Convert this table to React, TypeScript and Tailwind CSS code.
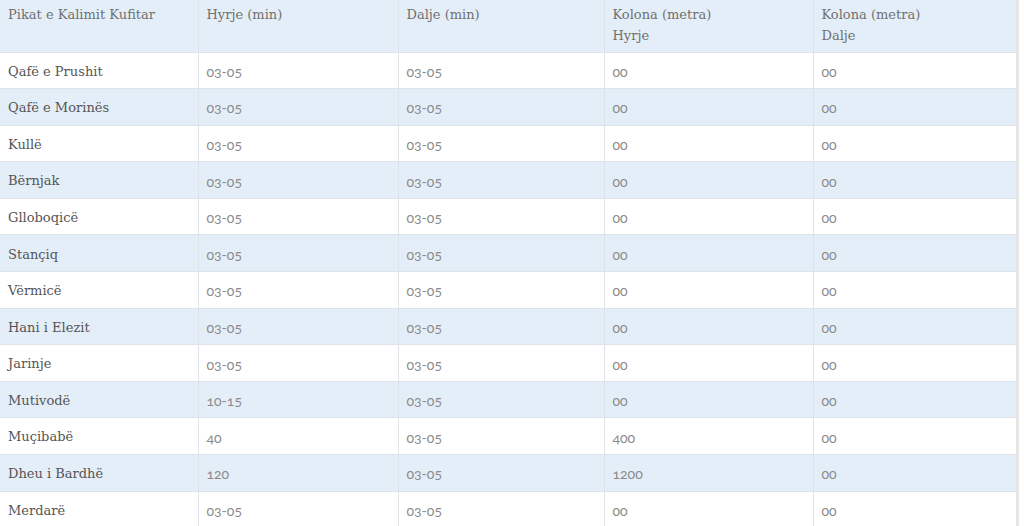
const rows: [string, string, string, string, string][] = [
  ["Qafë e Prushit", "03-05", "03-05", "00", "00"],
  ["Qafë e Morinës", "03-05", "03-05", "00", "00"],
  ["Kullë", "03-05", "03-05", "00", "00"],
  ["Bërnjak", "03-05", "03-05", "00", "00"],
  ["Glloboqicë", "03-05", "03-05", "00", "00"],
  ["Stançiq", "03-05", "03-05", "00", "00"],
  ["Vërmicë", "03-05", "03-05", "00", "00"],
  ["Hani i Elezit", "03-05", "03-05", "00", "00"],
  ["Jarinje", "03-05", "03-05", "00", "00"],
  ["Mutivodë", "10-15", "03-05", "00", "00"],
  ["Muçibabë", "40", "03-05", "400", "00"],
  ["Dheu i Bardhë", "120", "03-05", "1200", "00"],
  ["Merdarë", "03-05", "03-05", "00", "00"],
];

const slab = "font-['DejaVu_Serif',serif]";
const num = "font-['Lato',sans-serif] [font-variant-numeric:oldstyle-nums]";

export default function App() {
  return (
    <div className="w-[1024px] h-[526px] overflow-hidden bg-white">
      <table className="w-[1019px] table-fixed border-collapse border-r-[3px] border-r-[#e6e6e6]">
        <colgroup>
          <col className="w-[198px]" />
          <col className="w-[200px]" />
          <col className="w-[206px]" />
          <col className="w-[209px]" />
          <col />
        </colgroup>
        <thead>
          <tr className={`h-[52px] bg-[#e4eef8] text-[13px] leading-[21px] text-[#707070] ${slab}`}>
            <th className="border border-[#dde3e9] border-t-0 border-l-0 px-2 pt-[4px] align-top text-left font-normal">Pikat e Kalimit Kufitar</th>
            <th className="border border-[#dde3e9] border-t-0 px-2 pt-[4px] align-top text-left font-normal">Hyrje (min)</th>
            <th className="border border-[#dde3e9] border-t-0 px-2 pt-[4px] align-top text-left font-normal">Dalje (min)</th>
            <th className="border border-[#dde3e9] border-t-0 px-2 pt-[4px] align-top text-left font-normal">Kolona (metra)<br />Hyrje</th>
            <th className="border border-[#dde3e9] border-t-0 px-2 pt-[4px] align-top text-left font-normal">Kolona (metra)<br />Dalje</th>
          </tr>
        </thead>
        <tbody>
          {rows.map((r, i) => (
            <tr key={r[0]} className={`h-[36.6px] ${i % 2 === 1 ? "bg-[#e4eef8]" : "bg-white"}`}>
              <td className={`border border-[#dde3e9] border-l-0 px-2 pt-[2px] text-[13px] text-[#555] ${slab}`}>{r[0]}</td>
              {r.slice(1).map((c, j) => (
                <td key={j} className={`border border-[#dde3e9] px-2 pt-[2px] text-[14px] text-[#8a8a8a] ${num}`}>{c}</td>
              ))}
            </tr>
          ))}
        </tbody>
      </table>
    </div>
  );
}
